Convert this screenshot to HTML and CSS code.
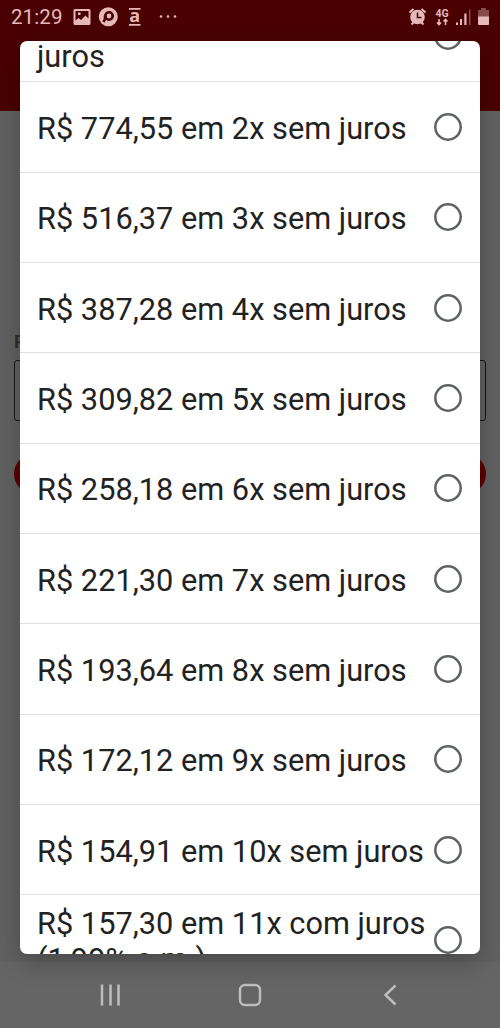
FILE: index.html
```html
<!DOCTYPE html>
<html lang="pt-BR">
<head>
<meta charset="utf-8">
<title>Parcelas</title>
<link rel="stylesheet" href="styles.css">
</head>
<body>
<div class="screen">
  <header class="top">
    <div class="status">
      <span class="clock">21:29</span>
      <svg class="status-left" width="108" height="24" viewBox="72 5 108 24">
        <path fill-rule="evenodd" d="M75 9h14q1.500 0 1.500 1.500v13q0 1.500-1.500 1.500h-14q-1.500 0-1.500-1.500v-13q0-1.500 1.500-1.500zM75.500 11v9.500l3-2.500 2.500 2 4.500-4.500 3 3V11zM78 12.500h2.500v2.500H78z"/>
        <circle cx="108.300" cy="16.800" r="9.500"/>
        <circle class="hole" cx="109" cy="16" r="3.700"/>
        <path class="hole" d="M105 15.500v3.500l-1.500 3"/>
        <path d="M129 8h11.500v1.800H129zM129 24h11.500v1.800H129z"/>
        <text x="129.300" y="21.800" class="glyph-a">a</text>
        <circle cx="161" cy="16.500" r="1.300"/><circle cx="168" cy="16.500" r="1.300"/><circle cx="175" cy="16.500" r="1.300"/>
      </svg>
      <svg class="status-right" width="84" height="24" viewBox="408 5 84 24">
        <circle cx="417.500" cy="17" r="7.300"/>
        <path class="stroke" d="M409.500 12.500l4-3.500M425.500 12.500l-4-3.500M411.500 24.500l2-2M423.500 24.500l-2-2"/>
        <path class="hand" d="M417.500 12.500v5h4"/>
        <text x="435.500" y="16.500" class="glyph-4g">4G</text>
        <path class="arrow" d="M439 19v5M437 22.500l2 2 2-2M445.500 25v-5M443.500 21.500l2-2 2 2"/>
        <path d="M456 22.500h2v2.500h-2zM460 19h2v6h-2zM464.300 13.500h2.200v11.500h-2.200z"/>
        <path class="dim" d="M469 9.500h1.500v15.500H469zM481 8h5v2h3v7h-11v-7h3z"/>
        <path d="M478 16.500h11v7.500q0 1-1 1h-9q-1 0-1-1z"/>
      </svg>
    </div>
  </header>
  <main class="page">
    <strong class="label">P</strong>
    <div class="select"></div>
    <div class="button"></div>
  </main>
  <section class="dialog">
    <div class="list">
      <div class="item first"><span><br>juros</span><svg class="radio" viewBox="0 0 28 28"><circle cx="14" cy="14" r="12.700"/></svg></div>
      <div class="item"><span>R$ 774,55 em 2x sem juros</span><svg class="radio" viewBox="0 0 28 28"><circle cx="14" cy="14" r="12.700"/></svg></div>
      <div class="item"><span>R$ 516,37 em 3x sem juros</span><svg class="radio" viewBox="0 0 28 28"><circle cx="14" cy="14" r="12.700"/></svg></div>
      <div class="item"><span>R$ 387,28 em 4x sem juros</span><svg class="radio" viewBox="0 0 28 28"><circle cx="14" cy="14" r="12.700"/></svg></div>
      <div class="item"><span>R$ 309,82 em 5x sem juros</span><svg class="radio" viewBox="0 0 28 28"><circle cx="14" cy="14" r="12.700"/></svg></div>
      <div class="item"><span>R$ 258,18 em 6x sem juros</span><svg class="radio" viewBox="0 0 28 28"><circle cx="14" cy="14" r="12.700"/></svg></div>
      <div class="item"><span>R$ 221,30 em 7x sem juros</span><svg class="radio" viewBox="0 0 28 28"><circle cx="14" cy="14" r="12.700"/></svg></div>
      <div class="item"><span>R$ 193,64 em 8x sem juros</span><svg class="radio" viewBox="0 0 28 28"><circle cx="14" cy="14" r="12.700"/></svg></div>
      <div class="item"><span>R$ 172,12 em 9x sem juros</span><svg class="radio" viewBox="0 0 28 28"><circle cx="14" cy="14" r="12.700"/></svg></div>
      <div class="item"><span>R$ 154,91 em 10x sem juros</span><svg class="radio" viewBox="0 0 28 28"><circle cx="14" cy="14" r="12.700"/></svg></div>
      <div class="item last"><span>R$ 157,30 em 11x com juros<br>(1,99% a.m.)</span><svg class="radio" viewBox="0 0 28 28"><circle cx="14" cy="14" r="12.700"/></svg></div>
    </div>
  </section>
  <nav class="nav">
    <svg width="24" height="24" viewBox="0 0 24 24"><path d="M4 1.500v21M12.500 1.500v21M20.500 1.500v21"/></svg>
    <svg width="24" height="24" viewBox="0 0 24 24"><rect x="2" y="2" width="20" height="20" rx="5"/></svg>
    <svg width="24" height="24" viewBox="0 0 24 24"><path d="M17.500 2.500L7.500 12l10 9.500"/></svg>
  </nav>
</div>
</body>
</html>
```
FILE: styles.css
```css
* { box-sizing: border-box; }
body { margin: 0; font-family: Roboto, "Liberation Sans", sans-serif; }
.screen {
  position: relative;
  display: flex;
  flex-direction: column;
  width: 500px;
  height: 1028px;
  overflow: hidden;
  background: #616161;
}
.top { height: 111px; background: #4a0000; }
.status { display: flex; align-items: center; height: 34px; padding: 0 8px 0 11px; color: #e6b9b9; }
.status svg { fill: #e6b9b9; }
.clock { width: 61px; font-size: 20.5px; letter-spacing: 0.1px; }
.status-right { margin-left: auto; }
.glyph-a { font: bold 18px "Open Sans", sans-serif; }
.glyph-4g { font: bold 10.5px Roboto, sans-serif; }
.status .stroke { fill: none; stroke: #e6b9b9; stroke-width: 2; }
.hand { fill: none; stroke: #4a0000; stroke-width: 1.5; }
.hole { fill: none; stroke: #4a0000; stroke-width: 2.6; }
.arrow { fill: none; stroke: #e6b9b9; stroke-width: 1.6; }
.dim { opacity: 0.4; }
.page { flex: 1; padding: 221px 14px 0; }
.label { display: block; height: 28px; font-size: 18px; line-height: 20px; color: #303030; }
.select { height: 61px; border: 1.5px solid #181818; border-radius: 3px; }
.button { height: 40px; margin-top: 33px; border-radius: 20px; background: #5c0000; }
.dialog {
  position: absolute;
  left: 20px;
  top: 41px;
  width: 460px;
  height: 912.5px;
  overflow: hidden;
  border-radius: 7px;
  background: #fff;
  box-shadow: 0 8px 24px rgba(0, 0, 0, 0.25);
}
.list { margin-top: -49.6px; }
.item {
  display: flex;
  align-items: center;
  justify-content: space-between;
  height: 90.33px;
  padding: 0 18px 0 17px;
  border-bottom: 1.5px solid #e0e0e0;
  font-size: 30.75px;
  line-height: 37px;
  color: #222;
  white-space: nowrap;
}
.item span { padding-top: 3px; }
.item.first { height: 91px; }
.item.last { line-height: 36.5px; }
.item.last span { padding-top: 4px; }
.radio { flex: none; width: 28px; height: 28px; margin-left: -8px; fill: none; stroke: #5f6266; stroke-width: 2.5; }
.nav { display: flex; align-items: center; justify-content: space-between; height: 66px; padding: 0 98px; background: #656565; }
.nav svg { fill: none; stroke: #bdbdbd; stroke-width: 2.5; }
```
